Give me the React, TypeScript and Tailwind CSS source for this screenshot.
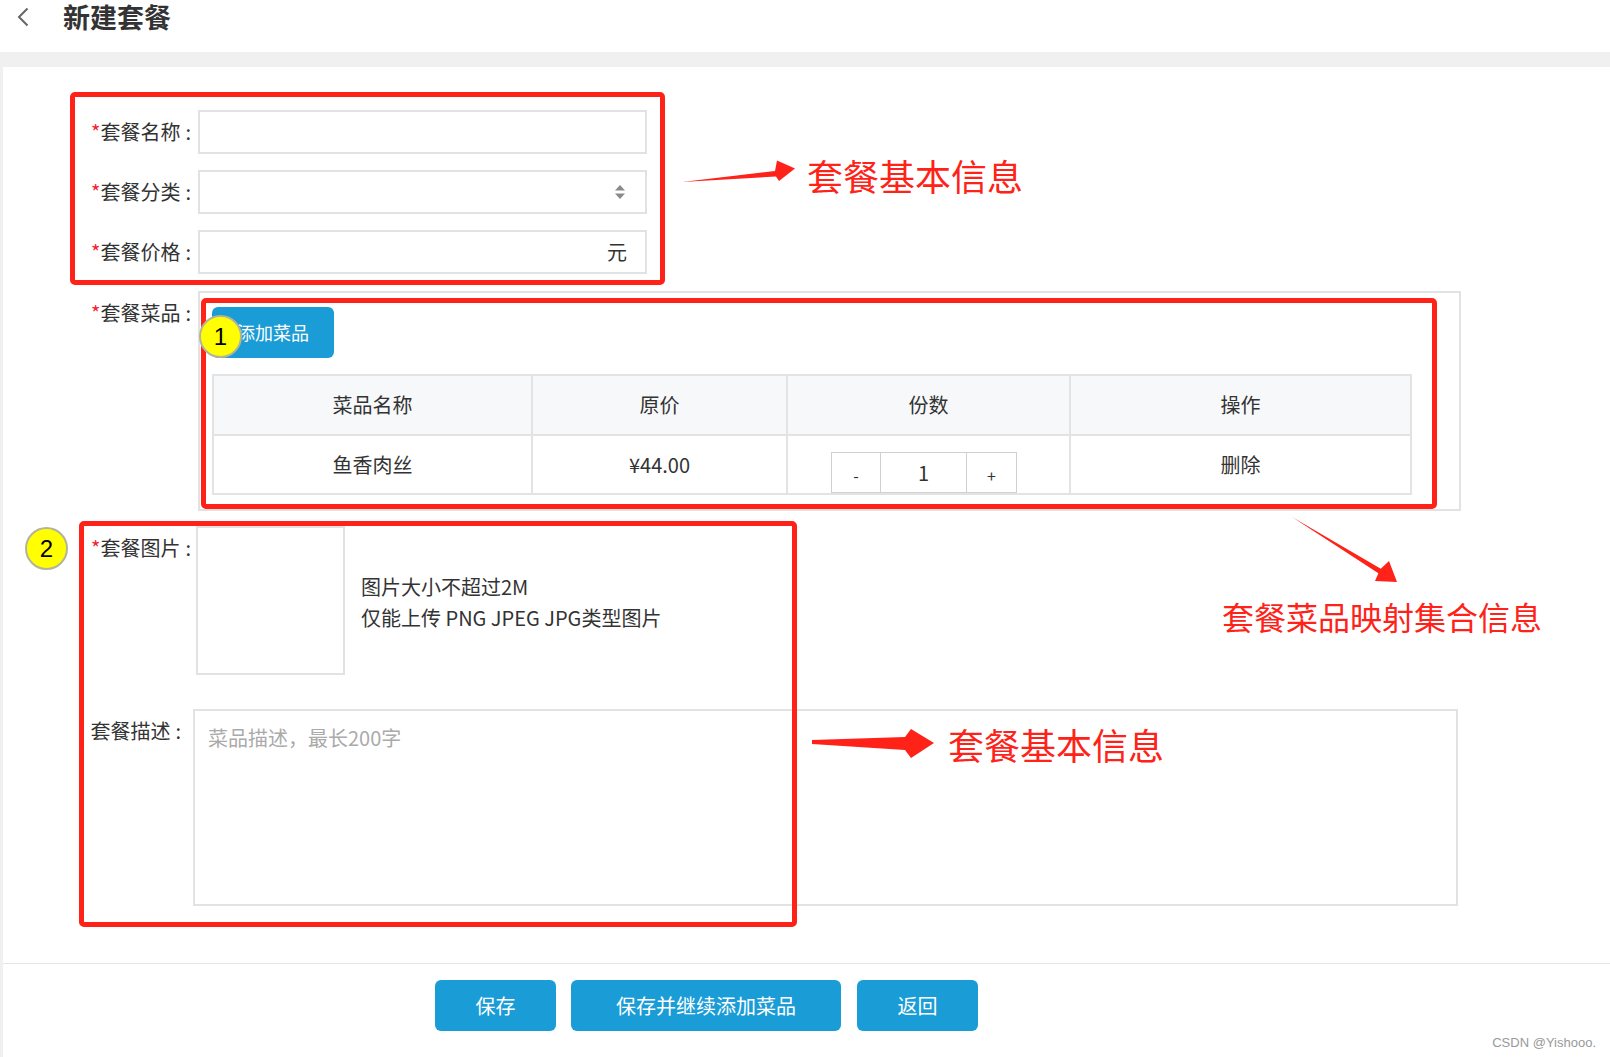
import type { ReactNode } from "react";

function FormRow({
    label,
    required,
    labelWidth = "w-[190px]",
    className = "",
    children,
}: {
    label: string;
    required?: boolean;
    labelWidth?: string;
    className?: string;
    children: ReactNode;
}) {
    return (
        <div className={`flex items-start ${className}`}>
            <div className={`${labelWidth} shrink-0 text-right text-[20px] leading-[44px] text-[#333]`}>
                {required && <span className="text-[#f5222d]">*</span>}
                {label}
                <span className="ml-[5px] mr-[2px]">:</span>
            </div>
            {children}
        </div>
    );
}

const dishes = [{ name: "鱼香肉丝", price: "¥44.00", copies: 1 }];

export default function App() {
    return (
        <div className="relative h-[1057px] w-[1610px] overflow-hidden bg-[#f0f0f0] font-['Noto_Sans_CJK_SC','Noto_Sans',sans-serif] text-[#333]">
            {/* Header */}
            <header className="flex h-[52px] items-start bg-white">
                <svg className="ml-[16px] mt-[7px]" width="14" height="20" viewBox="0 0 14 20">
                    <polyline points="11.5,1.5 3,10 11.5,18.5" fill="none" stroke="#666" strokeWidth="2" />
                </svg>
                <h1 className="ml-[33px] mt-[1px] text-[27px] font-bold leading-[32px] text-[#333]">新建套餐</h1>
            </header>

            {/* Form panel */}
            <main className="ml-[3px] mt-[15px] flex h-[990px] flex-col bg-white">
                <div className="pt-[43px]">
                    <FormRow label="套餐名称" required>
                        <input className="ml-[5px] h-[44px] w-[449px] border-2 border-[#e2e2e2] px-3 text-[20px] outline-none" />
                    </FormRow>

                    <FormRow label="套餐分类" required className="mt-[16px]">
                        <div className="ml-[5px] flex h-[44px] w-[449px] items-center justify-end border-2 border-[#e2e2e2] pr-[19px]">
                            <svg width="12" height="16" viewBox="0 0 12 16">
                                <polygon points="6,1 11,6.5 1,6.5" fill="#8a8a8a" />
                                <polygon points="1,9.5 11,9.5 6,15" fill="#8a8a8a" />
                            </svg>
                        </div>
                    </FormRow>

                    <FormRow label="套餐价格" required className="mt-[16px]">
                        <div className="ml-[5px] flex h-[44px] w-[449px] items-center justify-end border-2 border-[#e2e2e2] pr-[18px] text-[20px]">
                            元
                        </div>
                    </FormRow>

                    <FormRow label="套餐菜品" required className="mt-[17px]">
                        <div className="ml-[5px] w-[1263px] border-2 border-[#e2e2e2] pb-[14px] pl-[12px] pt-[14px]">
                            <button className="h-[51px] w-[122px] rounded-[6px] bg-[#1a9cd6] text-[18px] text-white">
                                添加菜品
                            </button>
                            <table className="mt-[16px] w-[1198px] table-fixed border-collapse text-center text-[20px]">
                                <colgroup>
                                    <col className="w-[319px]" />
                                    <col className="w-[255px]" />
                                    <col className="w-[283px]" />
                                    <col className="w-[341px]" />
                                </colgroup>
                                <thead>
                                    <tr className="h-[60px] bg-[#f7f8fa]">
                                        {["菜品名称", "原价", "份数", "操作"].map((h) => (
                                            <th key={h} className="border-2 border-[#e3e3e3] font-normal">
                                                {h}
                                            </th>
                                        ))}
                                    </tr>
                                </thead>
                                <tbody>
                                    {dishes.map((d) => (
                                        <tr key={d.name} className="h-[59px]">
                                            <td className="border-2 border-[#e3e3e3]">{d.name}</td>
                                            <td className="border-2 border-[#e3e3e3]">{d.price}</td>
                                            <td className="border-2 border-[#e3e3e3] align-bottom">
                                                <div className="ml-[43px] flex h-[41px] w-[186px] border border-[#d0d0d0]">
                                                    <span className="flex w-[49px] items-center justify-center border-r border-[#d0d0d0] pt-[4px] text-[16px]">-</span>
                                                    <span className="flex w-[86px] items-center justify-center border-r border-[#d0d0d0] text-[20px]">
                                                        {d.copies}
                                                    </span>
                                                    <span className="flex flex-1 items-center justify-center pt-[4px] text-[16px]">+</span>
                                                </div>
                                            </td>
                                            <td className="border-2 border-[#e3e3e3]">删除</td>
                                        </tr>
                                    ))}
                                </tbody>
                            </table>
                        </div>
                    </FormRow>

                    <FormRow label="套餐图片" required className="mt-[15px]">
                        <div className="ml-[3px] h-[149px] w-[149px] shrink-0 border-2 border-[#e2e2e2]" />
                        <div className="ml-[16px] mt-[45px] text-[20px] leading-[31px]">
                            <p>图片大小不超过2M</p>
                            <p>仅能上传 PNG JPEG JPG类型图片</p>
                        </div>
                    </FormRow>

                    <FormRow label="套餐描述" labelWidth="w-[180px]" className="mt-[34px]">
                        <textarea
                            readOnly
                            placeholder="菜品描述，最长200字"
                            className="ml-[10px] h-[197px] w-[1265px] resize-none border-2 border-[#e2e2e2] px-[13px] py-[12px] text-[20px] leading-[30px] outline-none placeholder:text-[#aaa]"
                        />
                    </FormRow>
                </div>

                {/* Footer */}
                <div className="mt-[57px] h-px bg-[#e6e6e6]" />
                <div className="mt-[16px] flex gap-[15px] pl-[432px]">
                    <button className="h-[51px] w-[121px] rounded-[6px] bg-[#1a9cd6] text-[20px] text-white">保存</button>
                    <button className="h-[51px] w-[270px] rounded-[6px] bg-[#1a9cd6] text-[20px] text-white">保存并继续添加菜品</button>
                    <button className="ml-px h-[51px] w-[121px] rounded-[6px] bg-[#1a9cd6] text-[20px] text-white">返回</button>
                </div>
            </main>

            {/* Annotations */}
            <div className="pointer-events-none absolute left-[70px] top-[92px] h-[193px] w-[595px] rounded-[5px] border-[5px] border-[#fe2218]" />
            <div className="pointer-events-none absolute left-[201px] top-[298px] h-[211px] w-[1236px] rounded-[5px] border-[5px] border-[#fe2218]" />
            <div className="pointer-events-none absolute left-[79px] top-[521px] h-[406px] w-[718px] rounded-[5px] border-[5px] border-[#fe2218]" />

            <div className="absolute left-[199px] top-[315px] flex h-[43px] w-[43px] items-center justify-center rounded-full border-2 border-[#b4b49a] bg-[#ffff00] font-['Liberation_Sans',sans-serif] text-[24px] text-black">
                1
            </div>
            <div className="absolute left-[25px] top-[527px] flex h-[43px] w-[43px] items-center justify-center rounded-full border-2 border-[#b4b49a] bg-[#ffff00] font-['Liberation_Sans',sans-serif] text-[24px] text-black">
                2
            </div>

            <svg className="pointer-events-none absolute left-0 top-0" width="1610" height="1057" viewBox="0 0 1610 1057">
                <polygon points="682,182 775,171 777,160.5 795,168.5 779,181 776,176.5" fill="#fe2218" />
                <polygon points="1292,517 1380.8,568.8 1389,561 1397,582 1375,581 1378.4,573.3" fill="#fe2218" />
                <polygon points="812,740 905,737 911,729 934,743 911,758 905,750 812,744" fill="#fe2218" />
            </svg>

            <span className="absolute left-[807px] top-[157px] text-[36px] leading-[36px] text-[#fe2218]">套餐基本信息</span>
            <span className="absolute left-[1222px] top-[600px] text-[32px] leading-[32px] text-[#fe2218]">套餐菜品映射集合信息</span>
            <span className="absolute left-[948px] top-[726px] text-[36px] leading-[36px] text-[#fe2218]">套餐基本信息</span>

            <span className="absolute right-[14px] top-[1033px] font-['Liberation_Sans',sans-serif] text-[13px] text-[#999]">
                CSDN @Yishooo.
            </span>
        </div>
    );
}
